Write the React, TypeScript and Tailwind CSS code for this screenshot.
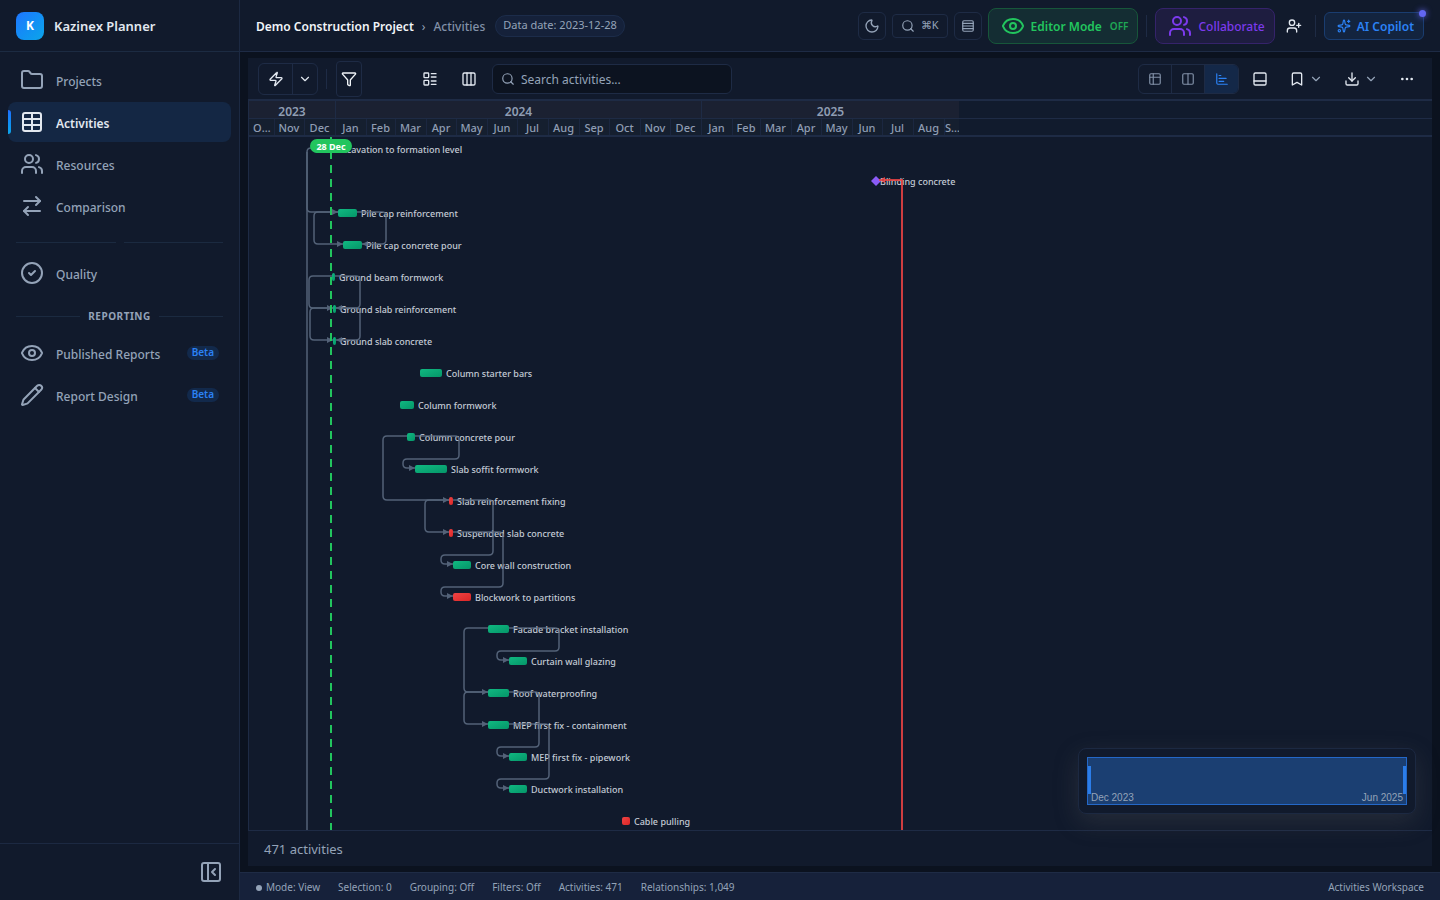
import { useState, type ReactNode } from 'react';
import {
  ArrowRightLeft,
  Bookmark,
  ChartBar,
  ChevronDown,
  CircleCheck,
  Columns2,
  Columns3,
  Download,
  Ellipsis,
  Eye,
  Folder,
  Funnel,
  LayoutList,
  Moon,
  PanelBottom,
  PanelLeftClose,
  Pencil,
  Rows4,
  Search,
  Sparkles,
  Table,
  UserPlus,
  Users,
  Zap,
  type LucideIcon
} from 'lucide-react';

interface NavItemProps {
  icon: LucideIcon;
  label: string;
  active?: boolean;
  beta?: boolean;
}

interface Activity {
  name: string;
  x: number;
  width: number;
  critical?: boolean;
  milestone?: boolean;
}

type Point = [number, number];

// One day is one pixel, so month widths are day counts
const YEARS = [
  { label: '2023', width: 86 },
  { label: '2024', width: 366 },
  { label: '2025', width: 258 }
];

const MONTHS: [string, number][] = [
  ['Oct', 25], ['Nov', 30], ['Dec', 31],
  ['Jan', 31], ['Feb', 29], ['Mar', 31], ['Apr', 30], ['May', 31], ['Jun', 30],
  ['Jul', 31], ['Aug', 31], ['Sep', 30], ['Oct', 31], ['Nov', 30], ['Dec', 31],
  ['Jan', 31], ['Feb', 28], ['Mar', 31], ['Apr', 30], ['May', 31], ['Jun', 30],
  ['Jul', 31], ['Aug', 31], ['Sep', 15]
];

const ACTIVITIES: Activity[] = [
  { name: 'Excavation to formation level', x: 66, width: 18 },
  { name: 'Blinding concrete', x: 627, width: 0, milestone: true },
  { name: 'Pile cap reinforcement', x: 89, width: 19 },
  { name: 'Pile cap concrete pour', x: 94, width: 19 },
  { name: 'Ground beam formwork', x: 83, width: 3 },
  { name: 'Ground slab reinforcement', x: 84, width: 3 },
  { name: 'Ground slab concrete', x: 84, width: 3 },
  { name: 'Column starter bars', x: 171, width: 22 },
  { name: 'Column formwork', x: 151, width: 14 },
  { name: 'Column concrete pour', x: 158, width: 8 },
  { name: 'Slab soffit formwork', x: 166, width: 32 },
  { name: 'Slab reinforcement fixing', x: 200, width: 4, critical: true },
  { name: 'Suspended slab concrete', x: 200, width: 4, critical: true },
  { name: 'Core wall construction', x: 204, width: 18 },
  { name: 'Blockwork to partitions', x: 204, width: 18, critical: true },
  { name: 'Facade bracket installation', x: 239, width: 21 },
  { name: 'Curtain wall glazing', x: 260, width: 18 },
  { name: 'Roof waterproofing', x: 239, width: 21 },
  { name: 'MEP first fix - containment', x: 239, width: 21 },
  { name: 'MEP first fix - pipework', x: 260, width: 18 },
  { name: 'Ductwork installation', x: 260, width: 18 },
  { name: 'Cable pulling', x: 373, width: 8, critical: true }
];

const ROW_HEIGHT = 32;
const CHART_HEIGHT = 760;
const DATA_DATE_X = 82;

const rowCenter = (row: number) => 12 + row * ROW_HEIGHT;
const linkY = (row: number) => rowCenter(row) - 1;
const barStart = (row: number) => ACTIVITIES[row].x;
const barEnd = (row: number) => ACTIVITIES[row].x + ACTIVITIES[row].width;

const startToStart = (from: number, to: number, x: number): Point[] => [
  [barStart(from), linkY(from)],
  [x, linkY(from)],
  [x, linkY(to)],
  [barStart(to), linkY(to)]
];

const finishToFinish = (from: number, to: number, x: number): Point[] => [
  [barEnd(from), linkY(from)],
  [x, linkY(from)],
  [x, linkY(to)],
  [barEnd(to), linkY(to)]
];

const finishToStart = (from: number, to: number, x: number): Point[] => [
  [barEnd(from), linkY(from)],
  [x, linkY(from)],
  [x, linkY(to) - 9],
  [barStart(to) - 12, linkY(to) - 9],
  [barStart(to) - 12, linkY(to)],
  [barStart(to), linkY(to)]
];

const LINKS: Point[][] = [
  startToStart(0, 2, 58),
  startToStart(2, 3, 65),
  finishToFinish(2, 3, 137),
  startToStart(4, 5, 60),
  finishToFinish(4, 5, 111),
  startToStart(5, 6, 61),
  finishToFinish(5, 6, 111),
  finishToStart(9, 10, 210),
  startToStart(9, 11, 134),
  startToStart(11, 12, 176),
  finishToStart(11, 13, 244),
  finishToStart(12, 14, 254),
  finishToStart(15, 16, 310),
  startToStart(15, 17, 215),
  startToStart(17, 18, 215),
  finishToStart(17, 19, 290),
  finishToStart(18, 20, 300)
];

// Builds an orthogonal path with rounded corners
function toPath(points: Point[], radius = 4) {
  let d = `M${points[0][0]} ${points[0][1]}`;
  for (let i = 1; i < points.length - 1; i++) {
    const [px, py] = points[i - 1];
    const [cx, cy] = points[i];
    const [nx, ny] = points[i + 1];
    const inX = cx - Math.sign(cx - px) * radius;
    const inY = cy - Math.sign(cy - py) * radius;
    const outX = cx + Math.sign(nx - cx) * radius;
    const outY = cy + Math.sign(ny - cy) * radius;
    d += `L${inX} ${inY}Q${cx} ${cy} ${outX} ${outY}`;
  }
  const last = points[points.length - 1];
  return `${d}L${last[0]} ${last[1]}`;
}

function NavItem({ icon: Icon, label, active, beta }: NavItemProps) {
  return (
    <a
      href="#"
      className={`relative flex h-10 items-center gap-3 rounded-lg px-3 text-xs ${
        active ? 'bg-[#142744] font-semibold text-slate-200' : 'font-medium text-[#94a3b8]'
      }`}
    >
      {active && (
        <span className="absolute top-2 left-0 h-6 w-[3px] rounded-r-sm bg-linear-to-b from-[#1f6fff] to-[#0ea5e9]" />
      )}
      <Icon className="size-6 shrink-0" strokeWidth={2} />
      <span className="flex-1 pt-[3px]">{label}</span>
      {beta && (
        <span className="flex h-3.5 items-center rounded-full bg-[#12294b] px-[5px] text-[10px] font-semibold text-[#2b82f6]">
          Beta
        </span>
      )}
    </a>
  );
}

function NavDivider({ label }: { label?: string }) {
  return (
    <div className="flex items-center gap-2 px-2 pt-3.5 pb-2">
      <span className="h-px flex-1 bg-[#1b2a40]" />
      {label && (
        <span className="text-[10px] leading-[14px] font-bold tracking-wider text-[#94a3b8]">{label}</span>
      )}
      <span className="h-px flex-1 bg-[#1b2a40]" />
    </div>
  );
}

function Sidebar() {
  return (
    <aside className="flex w-60 shrink-0 flex-col border-r border-[#1c2942] bg-[#111a2c]">
      <div className="flex h-[52px] shrink-0 items-center gap-2.5 border-b border-[#1c2b42] px-4">
        <span className="flex size-7 items-center justify-center rounded-lg bg-linear-to-br from-[#1f75ff] to-[#0ea5e9] text-xs font-bold text-white">
          K
        </span>
        <span className="pt-0.5 text-[13px] font-semibold text-slate-200">Kazinex Planner</span>
      </div>
      <nav className="flex flex-1 flex-col gap-0.5 p-2">
        <NavItem icon={Folder} label="Projects" />
        <NavItem icon={Table} label="Activities" active />
        <NavItem icon={Users} label="Resources" />
        <NavItem icon={ArrowRightLeft} label="Comparison" />
        <NavDivider />
        <NavItem icon={CircleCheck} label="Quality" />
        <NavDivider label="REPORTING" />
        <NavItem icon={Eye} label="Published Reports" beta />
        <NavItem icon={Pencil} label="Report Design" beta />
      </nav>
      <div className="flex h-[57px] shrink-0 items-center justify-end border-t border-[#1c2942] px-4">
        <button aria-label="Collapse sidebar" className="text-[#94a3b8]">
          <PanelLeftClose className="size-6" />
        </button>
      </div>
    </aside>
  );
}

function Separator() {
  return <span className="mx-0.5 h-[22px] w-px bg-[#1e2b45]" />;
}

function Header() {
  return (
    <header className="flex h-[52px] shrink-0 items-center justify-between border-b border-[#1e2b45] bg-[#111a2c] px-4">
      <div className="flex items-center text-xs">
        <span className="pt-0.5 font-semibold text-slate-100">Demo Construction Project</span>
        <span className="mx-2 pt-0.5 text-[#94a3b8]">›</span>
        <span className="pt-0.5 font-medium text-[#8291a8]">Activities</span>
        <span className="ml-2.5 flex h-[22px] items-center rounded-full border border-[#1c2c4a] bg-[#15213a] px-[7px] text-[11px] text-[#94a3b8]">
          Data date: 2023-12-28
        </span>
      </div>
      <div className="flex items-center gap-1.5">
        <button
          aria-label="Toggle theme"
          className="flex size-7 items-center justify-center rounded-md border border-[#1e2b45] text-[#94a3b8]"
        >
          <Moon className="size-4" />
        </button>
        <button className="flex h-6 items-center gap-1.5 rounded border border-[#1e2b45] px-2 text-[11px] text-[#94a3b8]">
          <Search className="size-3.5" />
          <span>⌘K</span>
        </button>
        <button
          aria-label="Row density"
          className="flex size-7 items-center justify-center rounded-md border border-[#1e2b45] text-[#94a3b8]"
        >
          <Rows4 className="size-3.5" />
        </button>
        <button className="flex h-9 items-center gap-1.5 rounded-lg border border-[#17563a] bg-[#142d33] pr-[9px] pl-3 text-xs font-semibold text-[#22c55e]">
          <Eye className="size-6" />
          <span className="pt-0.5">Editor Mode</span>
          <span className="ml-0.5 pt-0.5 text-[10px] opacity-80">OFF</span>
        </button>
        <Separator />
        <button className="flex h-9 items-center gap-1.5 rounded-lg border border-[#35236b] bg-[#1e1d40] pr-[9px] pl-3 text-xs font-medium text-[#7c3aed]">
          <Users className="size-6" />
          <span className="pt-0.5">Collaborate</span>
        </button>
        <button aria-label="Invite user" className="flex h-7 w-[26px] items-center justify-center text-slate-200">
          <UserPlus className="size-4" />
        </button>
        <Separator />
        <button className="relative flex h-7 items-center gap-1.5 rounded-md border border-[#1a3d70] bg-[#13243f] pr-[9px] pl-3 text-xs font-semibold text-[#2b82f6]">
          <Sparkles className="size-3.5" />
          <span className="pt-0.5">AI Copilot</span>
          <span className="absolute -top-[3px] -right-[3px] size-[7px] rounded-full bg-[#6366f1] shadow-[0_0_6px_#6366f1]" />
        </button>
      </div>
    </header>
  );
}

function ToolButton({ label, children }: { label: string; children: ReactNode }) {
  return (
    <button aria-label={label} className="flex h-8 items-center justify-center gap-1 text-slate-200">
      {children}
    </button>
  );
}

function GridIcon({ className }: { className?: string }) {
  return (
    <svg viewBox="0 0 24 24" fill="none" stroke="currentColor" strokeWidth={2} strokeLinecap="round" className={className}>
      <rect x="3" y="3" width="18" height="18" rx="2" />
      <path d="M3 9h18M9 3v18" />
    </svg>
  );
}

function Toolbar() {
  const [query, setQuery] = useState('');
  const [view, setView] = useState('gantt');
  const views = [
    { id: 'table', icon: GridIcon },
    { id: 'split', icon: Columns2 },
    { id: 'gantt', icon: ChartBar }
  ];

  return (
    <div className="flex h-[42px] shrink-0 items-center border-b border-[#1e2b45] px-2.5">
      <div className="flex h-8 rounded-md border border-[#1e2b45] text-slate-200">
        <button aria-label="Quick actions" className="flex w-[34px] items-center justify-center border-r border-[#1e2b45]">
          <Zap className="size-4" />
        </button>
        <button aria-label="More quick actions" className="flex w-6 items-center justify-center">
          <ChevronDown className="size-3.5" />
        </button>
      </div>
      <span className="mr-[9px] ml-2 h-5 w-px bg-[#1e2b45]" />
      <button
        aria-label="Filter"
        className="flex h-9 w-[26px] items-center justify-center rounded border border-[#1e2b45] text-slate-100"
      >
        <Funnel className="size-4" />
      </button>
      <div className="mr-[15px] ml-[60px] flex gap-[23px]">
        <ToolButton label="Layout">
          <LayoutList className="size-4" />
        </ToolButton>
        <ToolButton label="Columns">
          <Columns3 className="size-4" />
        </ToolButton>
      </div>
      <label className="flex h-[30px] w-60 items-center gap-1.5 rounded-md border border-[#1e2b45] bg-[#0c1320] px-2 text-[#94a3b8]">
        <Search className="size-3.5" />
        <input
          type="text"
          aria-label="Search activities"
          placeholder="Search activities..."
          value={query}
          onChange={e => setQuery(e.target.value)}
          className="min-w-0 flex-1 bg-transparent pt-0.5 text-xs outline-none placeholder:text-[#94a3b8]"
        />
      </label>
      <div className="ml-auto flex h-[30px] overflow-hidden rounded-md border border-[#1e2b45]">
        {views.map(({ id, icon: Icon }) => (
          <button
            key={id}
            aria-label={id}
            onClick={() => setView(id)}
            className={`flex w-[33px] items-center justify-center border-r border-[#1e2b45] last:border-r-0 ${
              view === id ? 'bg-[#142848] text-[#2b82f6]' : 'text-[#8291a8]'
            }`}
          >
            <Icon className="size-3.5" />
          </button>
        ))}
      </div>
      <div className="mr-[7px] ml-[13px] flex items-center gap-[21px]">
        <ToolButton label="Bottom panel">
          <PanelBottom className="size-4" />
        </ToolButton>
        <ToolButton label="Saved views">
          <Bookmark className="size-4" />
          <ChevronDown className="size-3.5 text-[#94a3b8]" />
        </ToolButton>
        <ToolButton label="Export">
          <Download className="size-4" />
          <ChevronDown className="size-3.5 text-[#94a3b8]" />
        </ToolButton>
        <ToolButton label="More">
          <Ellipsis className="size-4" />
        </ToolButton>
      </div>
    </div>
  );
}

function TimelineHeader() {
  return (
    <div className="shrink-0 border-b-2 border-[#1e2b45] bg-[#111b2d] text-[#8f9db3]">
      <div className="flex h-[18px] border-b border-[#1e2b45]">
        {YEARS.map(year => (
          <div
            key={year.label}
            className="border-l border-[#1e2b45] bg-[#1b2132] pt-0.5 text-center text-xs leading-[17px] font-semibold first:border-l-0"
            style={{ width: year.width }}
          >
            {year.label}
          </div>
        ))}
      </div>
      <div className="flex h-4">
        {MONTHS.map(([month, width], i) => (
          <div
            key={i}
            className="truncate border-l border-[#1b2740] bg-[#151f2f] pr-[3px] pl-0.5 text-center text-[11px] leading-[18px] font-medium first:border-l-0 first:px-1 last:px-0"
            style={{ width }}
          >
            {month}
          </div>
        ))}
      </div>
    </div>
  );
}

function GanttChart() {
  return (
    <svg width="100%" height={CHART_HEIGHT} className="block">
      <defs>
        <linearGradient id="bar-normal" x1="0" y1="0" x2="1" y2="1">
          <stop offset="0" stopColor="#10b981" />
          <stop offset="1" stopColor="#059669" />
        </linearGradient>
        <linearGradient id="bar-critical" x1="0" y1="0" x2="1" y2="1">
          <stop offset="0" stopColor="#ef4444" />
          <stop offset="1" stopColor="#dc2626" />
        </linearGradient>
        <marker id="arrow" markerUnits="userSpaceOnUse" markerWidth="6" markerHeight="6" refX="6" refY="3" orient="auto">
          <path d="M0 0L6 3L0 6Z" fill="#64748b" />
        </marker>
        <marker id="arrow-critical" markerUnits="userSpaceOnUse" markerWidth="6" markerHeight="6" refX="6" refY="3" orient="auto">
          <path d="M0 0L6 3L0 6Z" fill="#ef4444" />
        </marker>
      </defs>

      {ACTIVITIES.map(({ name, x, width, critical, milestone }, row) => {
        const y = rowCenter(row);
        return (
          <g key={name}>
            {milestone ? (
              <path d={`M${x - 5} ${y}L${x} ${y - 5}L${x + 5} ${y}L${x} ${y + 5}Z`} fill="#8b5cf6" />
            ) : (
              <rect
                x={x}
                y={y - 4}
                width={width}
                height={8}
                rx={2}
                fill={critical ? 'url(#bar-critical)' : 'url(#bar-normal)'}
              />
            )}
            <text x={x + width + 4} y={y + 4} className="fill-[#c3cad5] text-[9px] font-medium">
              {name}
            </text>
          </g>
        );
      })}

      <g fill="none" stroke="#64748b" strokeWidth={1.5} opacity={0.8}>
        <path d={`M58 15V${CHART_HEIGHT}`} />
        {LINKS.map((points, i) => (
          <path key={i} d={toPath(points)} markerEnd="url(#arrow)" />
        ))}
      </g>
      <path
        d={`M653 ${CHART_HEIGHT}V43H630`}
        fill="none"
        stroke="#ef4444"
        strokeWidth={2}
        opacity={0.85}
        markerEnd="url(#arrow-critical)"
      />

      {/* Data date line and its tag */}
      <path d={`M${DATA_DATE_X} 0V${CHART_HEIGHT}`} stroke="#22c55e" strokeWidth={2} strokeDasharray="8 6" />
      <rect x={DATA_DATE_X - 21} y={2} width={42} height={14} rx={7} fill="#22c55e" />
      <text x={DATA_DATE_X} y={13} textAnchor="middle" className="fill-white text-[9px] font-bold">
        28 Dec
      </text>
    </svg>
  );
}

function Minimap() {
  return (
    <div className="absolute right-4 bottom-4 w-[338px] rounded-lg border border-[#1c2942] bg-[#111a2c] p-2 shadow-[0_8px_24px_rgba(100,100,100,0.25)]">
      <div className="relative flex h-12 items-end justify-between border border-[#2468c8] bg-[#1b3f72] px-[3px] font-['Liberation_Sans',sans-serif] text-[10px] leading-3 text-[#94a3b8]">
        <span className="absolute top-2 left-0 h-7 w-[3px] bg-[#2b7de9]" />
        <span>Dec 2023</span>
        <span>Jun 2025</span>
        <span className="absolute top-2 right-0 h-7 w-[3px] bg-[#2b7de9]" />
      </div>
    </div>
  );
}

function StatusBar() {
  const items = ['Selection: 0', 'Grouping: Off', 'Filters: Off', 'Activities: 471', 'Relationships: 1,049'];

  return (
    <footer className="flex h-7 shrink-0 items-center gap-[18px] border-t border-[#1e2b45] bg-[#16213a] px-4 pt-0.5 text-[10px] text-[#94a3b8]">
      <span className="flex items-center gap-1">
        <span className="size-1.5 rounded-full bg-[#94a3b8]" />
        Mode: View
      </span>
      {items.map(item => (
        <span key={item}>{item}</span>
      ))}
      <span className="ml-auto">Activities Workspace</span>
    </footer>
  );
}

export default function App() {
  return (
    <div className="flex h-screen overflow-hidden bg-[#0b121f] font-['Noto_Sans',sans-serif]">
      <Sidebar />
      <div className="flex min-w-0 flex-1 flex-col">
        <Header />
        <main className="mx-2 my-1.5 flex min-h-0 flex-1 flex-col bg-[#111a2c]">
          <Toolbar />
          <section className="relative flex min-h-0 flex-1 flex-col border border-r-0 border-[#1e2b45]">
            <TimelineHeader />
            <div className="min-h-0 flex-1 overflow-hidden">
              <GanttChart />
            </div>
            <Minimap />
          </section>
          <div className="flex h-[35px] shrink-0 items-center px-4 pt-0.5 text-[13px] text-[#94a3b8]">471 activities</div>
        </main>
        <StatusBar />
      </div>
    </div>
  );
}
